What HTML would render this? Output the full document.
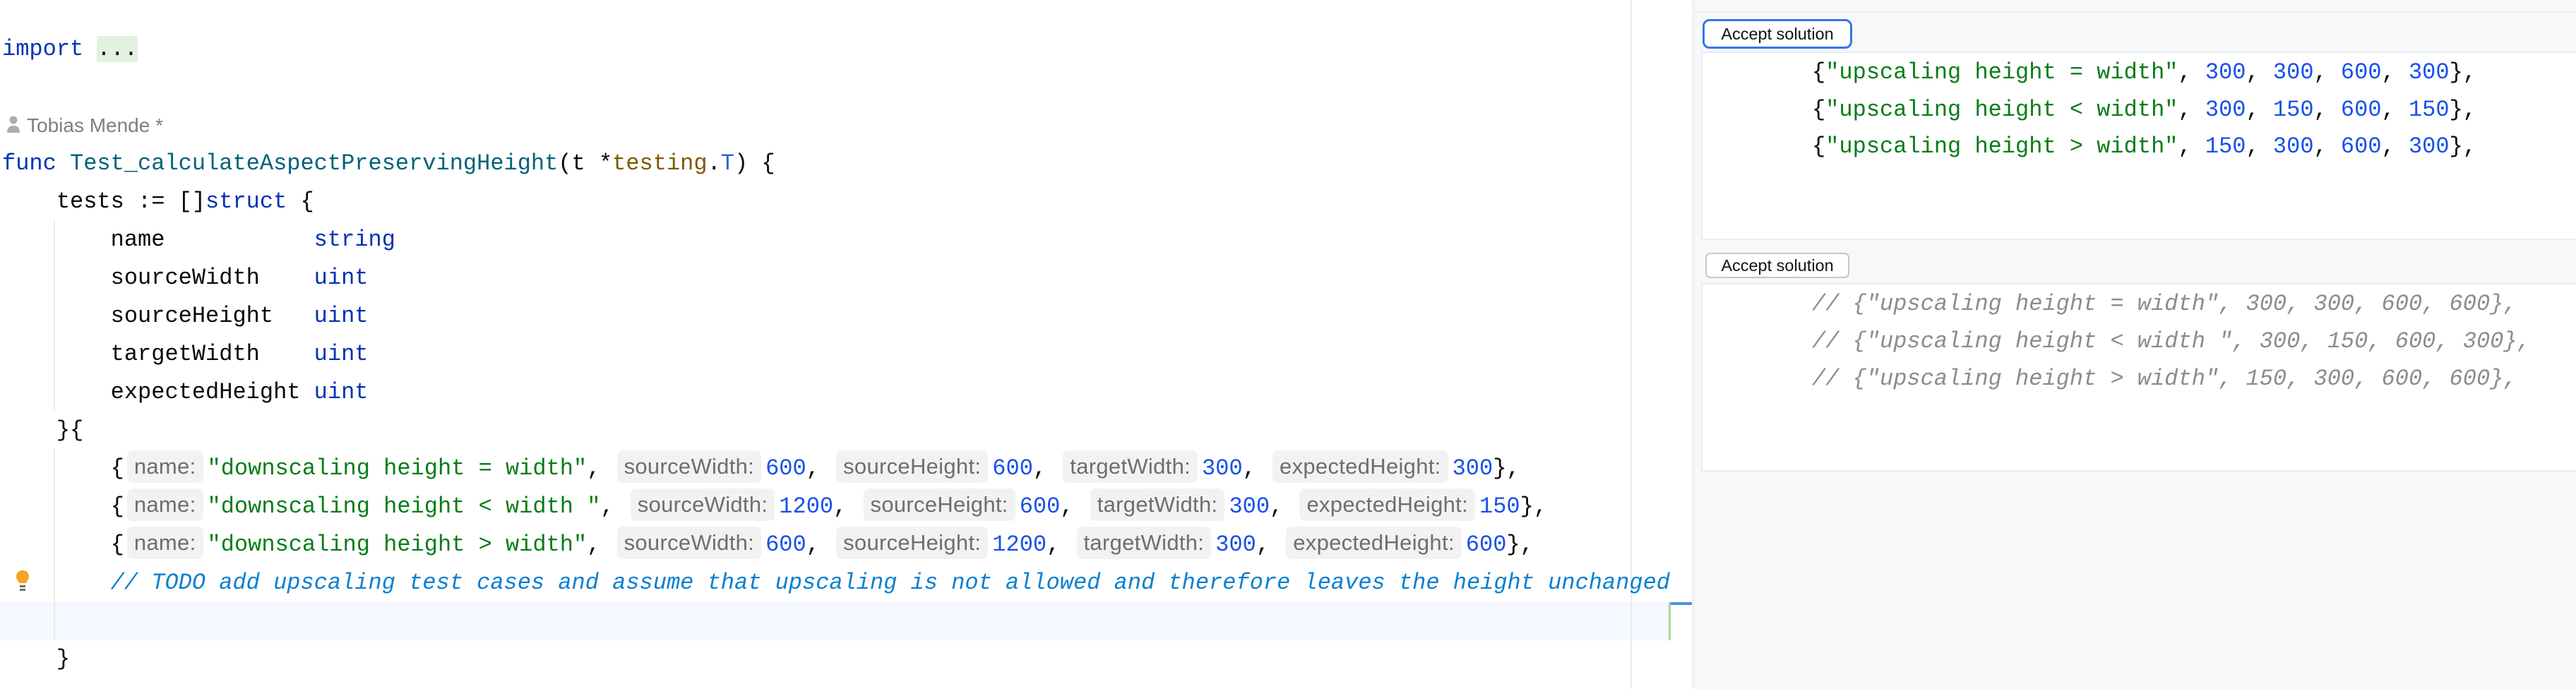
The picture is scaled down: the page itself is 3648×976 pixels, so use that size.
<!DOCTYPE html>
<html><head><meta charset="utf-8"><style>
html,body{margin:0;padding:0;}
body{width:3648px;height:976px;position:relative;background:#fff;overflow:hidden;font-family:"Liberation Mono",monospace;}
.l{position:absolute;left:3px;height:54px;line-height:54px;font-size:32px;white-space:pre;color:#080808;}
.k{color:#0033b3}.f{color:#00627a}.ty{color:#7d5b00}.s{color:#067d17}.n{color:#1750eb}
.td{color:#0a7fd0;font-style:italic}
.h{display:inline-block;font-family:"Liberation Sans",sans-serif;font-size:31px;letter-spacing:0.3px;color:#6e6e6e;background:#f2f2f2;border-radius:8px;height:46px;line-height:46px;padding:0 10px;vertical-align:middle;margin:0 6px 0 4px;position:relative;top:-3px}
.dots{background:#e3f2df;}
.btn{position:absolute;background:#fff;font-family:"Liberation Sans",sans-serif;font-size:23.5px;color:#111;text-align:center;box-sizing:border-box;}
.box{position:absolute;left:2409px;right:0;background:#fff;border:2px solid #ebecf0;border-right:none;box-sizing:border-box;}
.r{position:absolute;left:155px;height:54px;line-height:54px;font-size:32px;white-space:pre;color:#080808;}
.r.c{color:#8c8c8c;font-style:italic}
</style></head><body>
<div style="position:absolute;left:0;top:853px;width:2364px;height:54px;background:#f5f8fe"></div>
<div style="position:absolute;left:76px;top:311px;width:2px;height:270px;background:#ebebeb"></div>
<div style="position:absolute;left:76px;top:635px;width:2px;height:272px;background:#ebebeb"></div>
<div style="position:absolute;left:2309px;top:0;width:2px;height:976px;background:#ebecf0"></div>
<div style="position:absolute;left:2363px;top:853px;width:3px;height:54px;background:#a6d99f"></div>
<div style="position:absolute;left:2366px;top:853px;width:30px;height:4px;background:#4a90e2"></div>

<div class="l" style="top:43px"><span class="k">import</span> <span class="dots">...</span></div>
<div style="position:absolute;left:8px;top:161px;height:30px;">
<svg width="22" height="28" viewBox="0 0 22 28"><circle cx="11" cy="9" r="5.5" fill="#a8adb5"/><path d="M2 27 Q2 17 11 17 Q20 17 20 27 Z" fill="#a8adb5"/></svg></div>
<div style="position:absolute;left:38px;top:151px;height:54px;line-height:54px;font-family:'Liberation Sans',sans-serif;font-size:28px;color:#7f7f7f">Tobias Mende *</div>
<div class="l" style="top:205px"><span class="k">func</span> <span class="f">Test_calculateAspectPreservingHeight</span>(t *<span class="ty">testing</span>.<span style="color:#2f63d6">T</span>) {</div>
<div class="l" style="top:259px">    tests := []<span class="k">struct</span> {</div>
<div class="l" style="top:313px">        name           <span class="k">string</span></div>
<div class="l" style="top:367px">        sourceWidth    <span class="k">uint</span></div>
<div class="l" style="top:421px">        sourceHeight   <span class="k">uint</span></div>
<div class="l" style="top:475px">        targetWidth    <span class="k">uint</span></div>
<div class="l" style="top:529px">        expectedHeight <span class="k">uint</span></div>
<div class="l" style="top:583px">    }{</div>
<div class="l" style="top:637px">        {<span class="h">name:</span><span class="s">"downscaling height = width"</span>, <span class="h">sourceWidth:</span><span class="n">600</span>, <span class="h">sourceHeight:</span><span class="n">600</span>, <span class="h">targetWidth:</span><span class="n">300</span>, <span class="h">expectedHeight:</span><span class="n">300</span>},</div>
<div class="l" style="top:691px">        {<span class="h">name:</span><span class="s">"downscaling height &lt; width "</span>, <span class="h">sourceWidth:</span><span class="n">1200</span>, <span class="h">sourceHeight:</span><span class="n">600</span>, <span class="h">targetWidth:</span><span class="n">300</span>, <span class="h">expectedHeight:</span><span class="n">150</span>},</div>
<div class="l" style="top:745px">        {<span class="h">name:</span><span class="s">"downscaling height &gt; width"</span>, <span class="h">sourceWidth:</span><span class="n">600</span>, <span class="h">sourceHeight:</span><span class="n">1200</span>, <span class="h">targetWidth:</span><span class="n">300</span>, <span class="h">expectedHeight:</span><span class="n">600</span>},</div>
<div class="l td" style="top:799px">        // TODO add upscaling test cases and assume that upscaling is not allowed and therefore leaves the height unchanged</div>
<div class="l" style="top:907px">    }</div>
<div style="position:absolute;left:21px;top:807px">
<svg width="22" height="32" viewBox="0 0 22 32"><path d="M11 1 C5 1 2 5 2 10 C2 14 5 16 6 19 L16 19 C17 16 20 14 20 10 C20 5 17 1 11 1 Z" fill="#f5a524"/><rect x="7" y="22" width="8" height="3" fill="#6e6e6e"/><rect x="7" y="27" width="8" height="3" fill="#6e6e6e"/></svg></div>

<div style="position:absolute;left:2397px;top:0;width:1251px;height:976px;background:#f7f8fa;border-left:2px solid #ebecf0"></div>
<div style="position:absolute;left:2399px;top:16px;width:1249px;height:2px;background:#ebecf0"></div>
<div class="btn" style="left:2411px;top:27px;width:212px;height:42px;border:3px solid #3574f0;border-radius:10px;line-height:36px">Accept solution</div>
<div class="box" style="top:73px;height:267px">
<div class="r" style="top:1px">{<span class="s">"upscaling height = width"</span>, <span class="n">300</span>, <span class="n">300</span>, <span class="n">600</span>, <span class="n">300</span>},</div>
<div class="r" style="top:54px">{<span class="s">"upscaling height &lt; width"</span>, <span class="n">300</span>, <span class="n">150</span>, <span class="n">600</span>, <span class="n">150</span>},</div>
<div class="r" style="top:106px">{<span class="s">"upscaling height &gt; width"</span>, <span class="n">150</span>, <span class="n">300</span>, <span class="n">600</span>, <span class="n">300</span>},</div>
</div>
<div class="btn" style="left:2415px;top:358px;width:204px;height:36px;border:2px solid #c4c7ce;border-radius:7px;line-height:32px">Accept solution</div>
<div class="box" style="top:401px;height:267px">
<div class="r c" style="top:1px">// {"upscaling height = width", 300, 300, 600, 600},</div>
<div class="r c" style="top:54px">// {"upscaling height &lt; width ", 300, 150, 600, 300},</div>
<div class="r c" style="top:107px">// {"upscaling height &gt; width", 150, 300, 600, 600},</div>
</div>
</body></html>
